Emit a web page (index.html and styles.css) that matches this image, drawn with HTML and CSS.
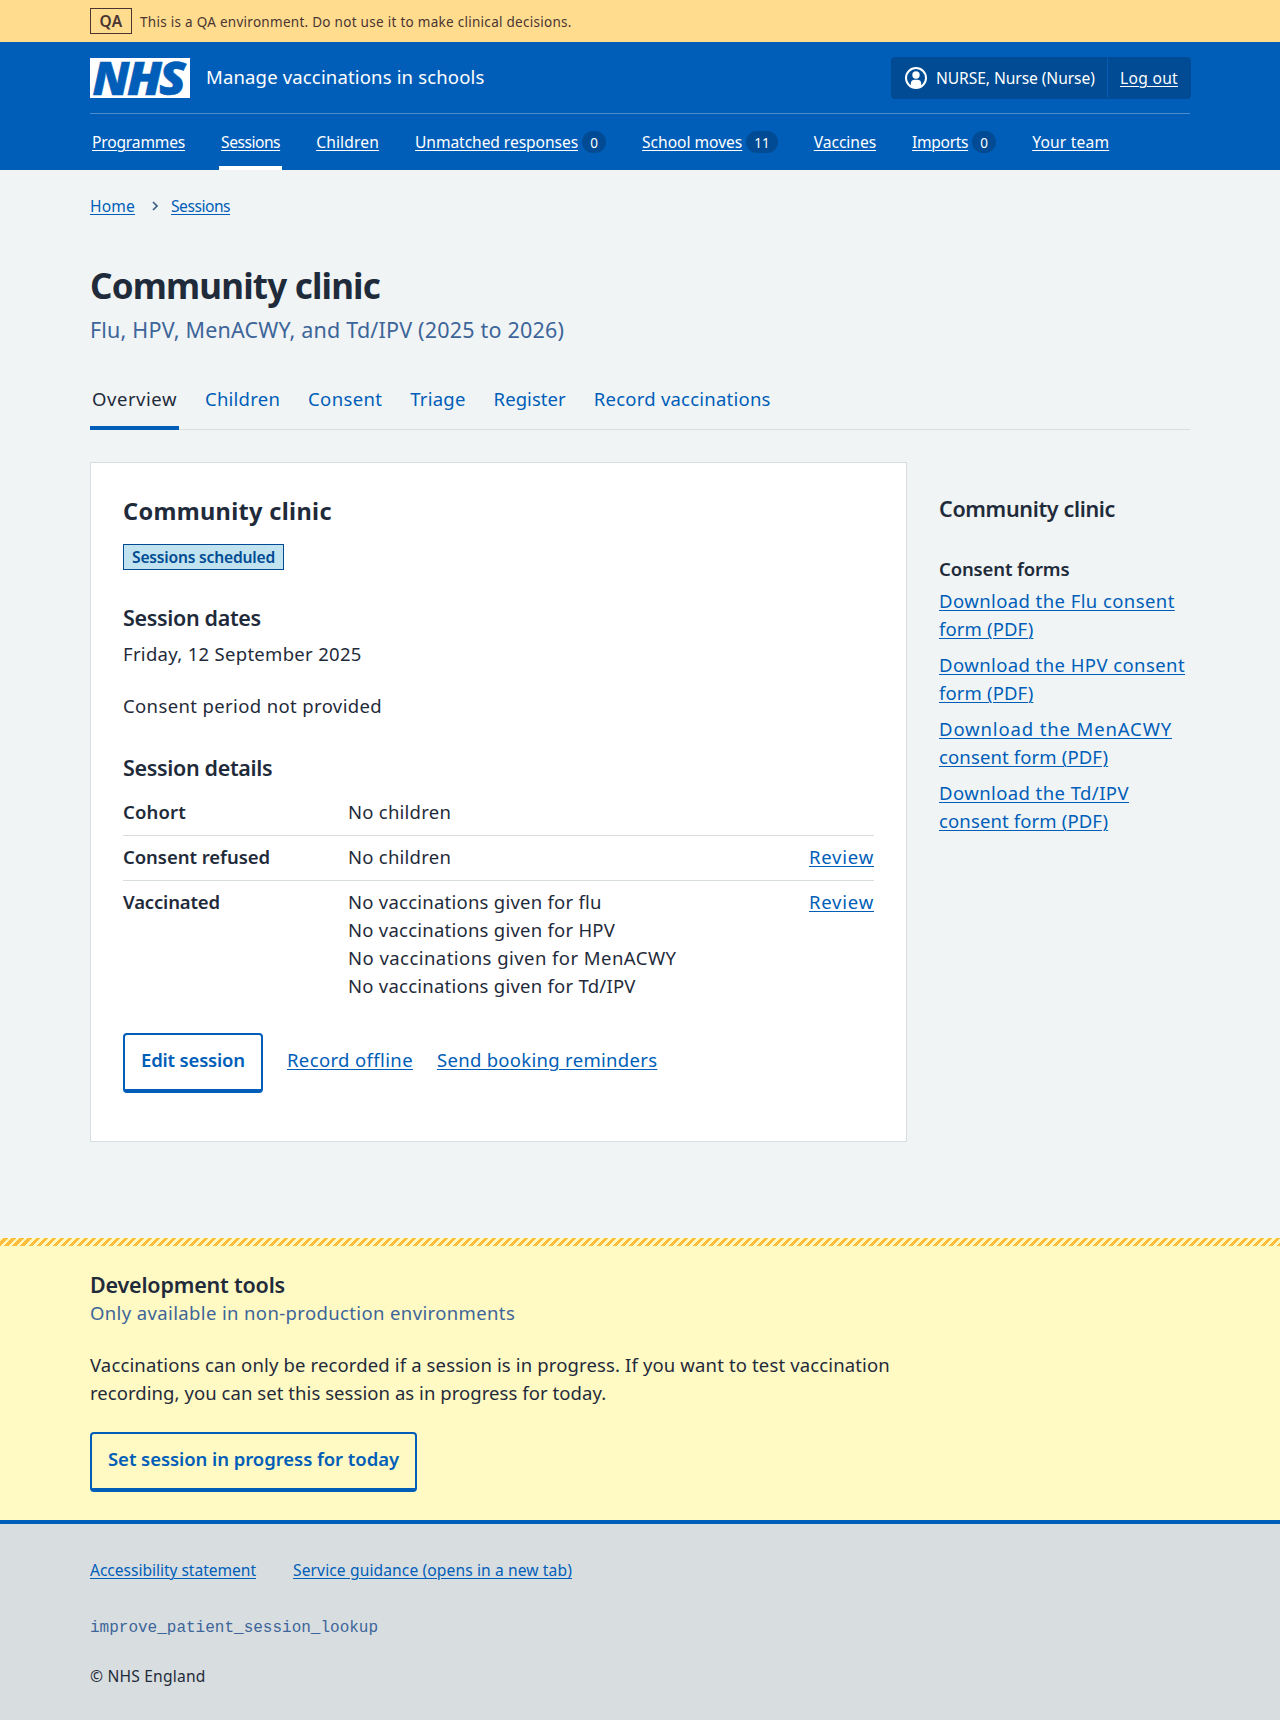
FILE: index.html
```
<!DOCTYPE html>
<html lang="en">
<head>
<meta charset="utf-8">
<title>Community clinic - Manage vaccinations in schools</title>
<link rel="stylesheet" href="styles.css">
</head>
<body>
<div class="environment">
  <div class="container environment__inner">
    <strong class="environment__tag">QA</strong>
    <span class="environment__text">This is a QA environment. Do not use it to make clinical decisions.</span>
  </div>
</div>
<header class="header">
  <div class="container">
    <div class="header__top">
      <a class="header__service" href="#">
        <svg class="header__logo" viewBox="0 0 100 40" width="100" height="40" role="img" aria-label="NHS">
          <rect width="100" height="40" fill="#fff"/>
          <g class="header__logo-text">
            <text x="2.500" y="36.500" textLength="37" lengthAdjust="spacingAndGlyphs">N</text>
            <text x="37" y="36.500" textLength="35" lengthAdjust="spacingAndGlyphs">H</text>
            <text x="69" y="36.500" textLength="27" lengthAdjust="spacingAndGlyphs">S</text>
          </g>
        </svg>
        <span class="header__name">Manage vaccinations in schools</span>
      </a>
      <div class="account">
        <div class="account__user">
          <svg width="24" height="24" viewBox="0 0 24 24" aria-hidden="true">
            <circle cx="12" cy="12" r="10" fill="none" stroke="#fff" stroke-width="2"/>
            <circle cx="12" cy="9" r="3.7" fill="#fff"/>
            <path d="M6.8 20.5v-2.700a4 4 0 0 1 4-4h2.400a4 4 0 0 1 4 4v2.700A10 10 0 0 1 12 22a10 10 0 0 1-5.200-1.500z" fill="#fff"/>
          </svg>
          <span class="account__name">NURSE, Nurse (Nurse)</span>
        </div>
        <div class="account__action"><a href="#">Log out</a></div>
      </div>
    </div>
    <nav class="nav">
      <div class="nav__item"><a class="nav__programmes" href="#">Programmes</a></div>
      <div class="nav__item nav__item--current"><a class="nav__sessions" href="#">Sessions</a></div>
      <div class="nav__item"><a class="nav__children" href="#">Children</a></div>
      <div class="nav__item"><a class="nav__responses" href="#">Unmatched responses</a><span class="nav__count">0</span></div>
      <div class="nav__item"><a class="nav__moves" href="#">School moves</a><span class="nav__count">11</span></div>
      <div class="nav__item"><a class="nav__vaccines" href="#">Vaccines</a></div>
      <div class="nav__item"><a class="nav__imports" href="#">Imports</a><span class="nav__count">0</span></div>
      <div class="nav__item"><a class="nav__team" href="#">Your team</a></div>
    </nav>
  </div>
</header>
<main class="container main">
  <nav class="breadcrumb">
    <a class="breadcrumb__home" href="#">Home</a>
    <svg width="6" height="10" viewBox="0 0 6 10" aria-hidden="true"><path d="M1 1l4 4-4 4" fill="none" stroke="#3d5f86" stroke-width="1.7"/></svg>
    <a class="breadcrumb__sessions" href="#">Sessions</a>
  </nav>
  <h1 class="title">Community clinic</h1>
  <p class="subtitle">Flu, HPV, MenACWY, and Td/IPV (2025 to 2026)</p>
  <nav class="tabs">
    <a class="tabs__item tabs__item--current" href="#">Overview</a>
    <a class="tabs__item" href="#">Children</a>
    <a class="tabs__item tabs__item--consent" href="#">Consent</a>
    <a class="tabs__item" href="#">Triage</a>
    <a class="tabs__item tabs__item--register" href="#">Register</a>
    <a class="tabs__item" href="#">Record vaccinations</a>
  </nav>
  <div class="columns">
    <section class="card">
      <h2 class="card__title">Community clinic</h2>
      <strong class="tag">Sessions scheduled</strong>
      <h3 class="heading">Session dates</h3>
      <p class="card__date">Friday, 12 September 2025</p>
      <p class="card__period">Consent period not provided</p>
      <h3 class="heading">Session details</h3>
      <dl class="summary">
        <div class="summary__row"><dt class="summary__cohort">Cohort</dt><dd>No children</dd></div>
        <div class="summary__row"><dt>Consent refused</dt><dd>No children</dd><dd class="summary__action"><a href="#">Review</a></dd></div>
        <div class="summary__row"><dt class="summary__vaccinated">Vaccinated</dt><dd>No vaccinations given for flu<br>No vaccinations given for HPV<br><span class="summary__wide">No vaccinations given for MenACWY</span><br>No vaccinations given for Td/IPV</dd><dd class="summary__action"><a href="#">Review</a></dd></div>
      </dl>
      <div class="actions">
        <a class="button button--edit" href="#">Edit session</a>
        <a class="actions__offline" href="#">Record offline</a>
        <a class="actions__send" href="#">Send booking reminders</a>
      </div>
    </section>
    <aside class="sidebar">
      <h2 class="sidebar__title">Community clinic</h2>
      <h3 class="sidebar__heading">Consent forms</h3>
      <ul class="downloads">
        <li><a href="#">Download the Flu consent <span class="downloads__end">form (PDF)</span></a></li>
        <li><a href="#">Download the HPV consent <span class="downloads__end">form (PDF)</span></a></li>
        <li><a href="#"><span class="downloads__wide">Download the MenACWY</span> <span class="downloads__end">consent form (PDF)</span></a></li>
        <li><a href="#">Download the Td/IPV <span class="downloads__end">consent form (PDF)</span></a></li>
      </ul>
    </aside>
  </div>
</main>
<section class="devtools">
  <div class="container">
    <h2 class="devtools__title">Development tools</h2>
    <p class="devtools__caption">Only available in non-production environments</p>
    <p class="devtools__text">Vaccinations can only be recorded if a session is in progress. If you want to test vaccination <span class="devtools__text-end">recording, you can set this session as in progress for today.</span></p>
    <a class="button" href="#">Set session in progress for today</a>
  </div>
</section>
<footer class="footer">
  <div class="container">
    <div class="footer__links">
      <a class="footer__accessibility" href="#">Accessibility statement</a>
      <a class="footer__guidance" href="#">Service guidance (opens in a new tab)</a>
    </div>
    <code class="footer__version">improve_patient_session_lookup</code>
    <p class="footer__copyright">© NHS England</p>
  </div>
</footer>
</body>
</html>
```
FILE: styles.css
```
*, *::before, *::after { box-sizing: border-box; }
body {
  margin: 0;
  min-height: 1720px;
  display: flex;
  flex-direction: column;
  background: #f0f4f5;
  color: #1f2b3a;
  font: 400 18.5px/28px "Noto Sans", "Open Sans", sans-serif;
}
h1, h2, h3, p, dl, dd, ul { margin: 0; padding: 0; }
h1, h2, h3, dt, strong { font-weight: 600; }
ul { list-style: none; }
a {
  color: #005eb8;
  text-decoration-line: underline;
  text-decoration-thickness: 1px;
  text-underline-offset: 1.5px;
  text-decoration-skip-ink: auto;
}
svg { display: block; flex: none; }
.container { width: 1100px; margin: 0 auto; }

/* Environment banner */
.environment { background: #ffdc8e; color: #4a3532; }
.environment__inner { display: flex; align-items: center; gap: 8px; height: 42px; }
.environment__tag {
  width: 42px; height: 26px;
  border: 1px solid #4a3532;
  font-size: 15.5px; line-height: 25px; letter-spacing: .35px; text-align: center;
}
.environment__text { font-size: 13.5px; line-height: 24px; letter-spacing: .28px; padding-top: 2px; }

/* Header */
.header { background: #005eb8; color: #fff; font-size: 15.6px; line-height: 24px; }
.header a { color: #fff; }
.header__top { display: flex; justify-content: space-between; align-items: center; padding: 15px 0 14px; }
.header a.header__service { display: flex; align-items: center; gap: 16px; text-decoration: none; }
.header__logo { overflow: visible; }
.header__logo-text {
  fill: #005eb8; stroke: #005eb8; stroke-width: .5px;
  font: italic 800 45.5px/1 "Open Sans", "Noto Sans", sans-serif;
}
.header__name { font-size: 18.5px; line-height: 28px; letter-spacing: .16px; margin-top: -2px; }
.account { display: flex; height: 42px; padding: 1px 0; width: 300px; margin-right: -1px; border-radius: 4px; background: #004b93; }
.account__user { display: flex; align-items: center; gap: 8px; padding-left: 13px; width: 217px; border-right: 1px solid #005eb8; }
.account__name { letter-spacing: -.07px; white-space: nowrap; }
.account__action { padding: 8px 0 0 12px; letter-spacing: .29px; }
.nav { display: flex; gap: 32px; border-top: 1px solid #4c8ecd; }
.nav__item { display: flex; align-items: center; padding: 16px 2px; height: 56px; }
.nav__item--current { box-shadow: inset 0 -4px #fff; }
.nav__programmes { letter-spacing: -.18px; }
.nav__sessions, .breadcrumb__sessions { letter-spacing: -.48px; }
.nav__children { letter-spacing: .15px; }
.nav__responses { letter-spacing: -.07px; }
.nav__moves { letter-spacing: -.02px; }
.nav__vaccines { letter-spacing: -.05px; }
.nav__imports { letter-spacing: -.33px; }
.nav__team { letter-spacing: .18px; }
.nav__count {
  min-width: 24px; height: 22px; margin-left: 4px; padding: 0 8px;
  border-radius: 11px; background: #004b93;
  font-size: 13.5px; line-height: 24px; text-align: center;
}

/* Page heading */
.main { padding: 24px 0 96px; }
.breadcrumb { display: flex; align-items: center; font-size: 15.6px; line-height: 24px; }
.breadcrumb svg { margin: 0 13px 0 17px; }
.breadcrumb__home { letter-spacing: .16px; }
.title { margin-top: 46px; font-size: 35px; font-weight: 700; line-height: 44px; letter-spacing: -.82px; }
.subtitle { margin-top: 6px; font-size: 21.5px; line-height: 32px; letter-spacing: .2px; color: #3d6599; }
.tabs { display: flex; gap: 24px; margin-top: 34px; height: 50px; box-shadow: inset 0 -1px #d8dde0; }
.tabs__item { padding: 5px 2px 0; text-decoration: none; letter-spacing: .23px; }
.tabs__item--current { color: #1f2b3a; letter-spacing: .54px; box-shadow: inset 0 -4px #005eb8; }
.tabs__item--consent { letter-spacing: .35px; }
.tabs__item--register { letter-spacing: .06px; }

/* Session card */
.columns { display: grid; grid-template-columns: 817px 251px; gap: 32px; align-items: start; margin-top: 32px; }
.card { padding: 32px; border: 1px solid #d8dde0; background: #fff; }
.card__title { font-size: 23.5px; font-weight: 700; line-height: 32px; letter-spacing: .34px; }
.tag {
  display: block; width: max-content; margin-top: 17px; padding: 0 8px;
  border: 1px solid #004b93; background: #c1e3ef; color: #004b93;
  font-size: 15.6px; line-height: 24px; letter-spacing: -.19px;
}
.heading { margin-top: 32px; font-size: 21.5px; line-height: 32px; letter-spacing: -.34px; }
.card__date { margin-top: 6px; letter-spacing: .3px; }
.card__period { margin-top: 24px; letter-spacing: .37px; }
.summary { margin-top: 7px; letter-spacing: .24px; }
.summary__row { display: grid; grid-template-columns: 225px 1fr auto; padding: 7px 0 9px; border-bottom: 1px solid #d8dde0; }
.summary__row:last-child { border-bottom: 0; }
.summary dt { letter-spacing: -.05px; }
.summary .summary__cohort { letter-spacing: .17px; }
.summary .summary__vaccinated { letter-spacing: -.15px; }
.summary__wide { letter-spacing: .45px; }
.summary__action { letter-spacing: .78px; }
.actions { display: flex; align-items: center; gap: 24px; margin: 24px 0 16px; }
.actions__offline { letter-spacing: .37px; }
.actions__send { letter-spacing: .3px; }
.actions > a:not(.button) { padding-bottom: 6px; }
.button {
  display: block; width: max-content; padding: 11px 16px 15px;
  border: 2px solid #005eb8; border-bottom-width: 4px; border-radius: 4px;
  font-weight: 600; letter-spacing: -.06px; text-decoration: none;
}
.button--edit { letter-spacing: -.18px; }

/* Sidebar */
.sidebar { padding-top: 31px; }
.sidebar__title { font-size: 21.5px; line-height: 32px; letter-spacing: -.34px; }
.sidebar__heading { margin-top: 30px; font-size: 18.5px; line-height: 28px; letter-spacing: -.14px; }
.downloads { display: grid; gap: 8px; margin-top: 4px; letter-spacing: .42px; }
.downloads__end { letter-spacing: .13px; }
.downloads__wide { letter-spacing: .87px; }

/* Development tools */
.devtools {
  padding: 32px 0 28px;
  background:
    repeating-linear-gradient(135deg, transparent 0 2.828px, #fcbc3c 2.828px 5.657px) 0 0 / 100% 8px no-repeat,
    #fff9c4;
}
.devtools__title { font-size: 21.5px; line-height: 30px; letter-spacing: -.19px; }
.devtools__caption { margin-top: -1px; color: #3d6599; letter-spacing: .37px; }
.devtools__text { max-width: 806px; margin: 24px 0 25px; letter-spacing: .14px; }
.devtools__text-end { letter-spacing: .06px; }

/* Footer */
.footer { flex: 1; padding-top: 34px; border-top: 4px solid #005eb8; background: #d8dde0; font-size: 15.6px; line-height: 24px; }
.footer__links { display: flex; gap: 37px; }
.footer__accessibility { letter-spacing: -.04px; }
.footer__guidance { letter-spacing: .11px; }
.footer__version { display: block; margin-top: 34px; color: #3d6599; font: 16px/24px "Liberation Mono", monospace; }
.footer__copyright { margin-top: 24px; letter-spacing: .2px; }
```
